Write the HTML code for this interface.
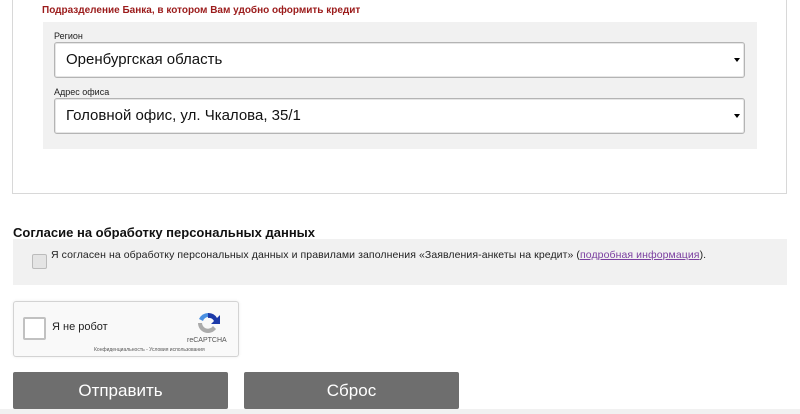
<!DOCTYPE html>
<html><head><meta charset="utf-8"><style>
body{margin:0;width:800px;height:414px;background:#fff;position:relative;overflow:hidden;font-family:"Liberation Sans",Arial,sans-serif;}
.a{position:absolute}
.sel{position:absolute;left:54px;width:689px;height:34px;background:#fff;border:1px solid #b4b4b4;border-radius:3px;box-shadow:inset 0 0 0 1px #e6e6e6;font-size:15px;color:#111;line-height:34px;text-indent:11px}
.sel:after{content:"";position:absolute;right:4px;top:15px;border-left:3px solid transparent;border-right:3px solid transparent;border-top:4px solid #000}
.lbl{position:absolute;left:54px;font-size:9px;color:#222}
.btn{position:absolute;top:372px;height:37px;width:215px;background:#6e6e6e;border-radius:2px;color:#fff;font-size:17px;text-align:center;line-height:37px}
</style></head><body>
<div class="a" style="left:12px;top:-2px;width:773px;height:195px;border:1px solid #d8d8d8;border-top:none"></div>
<div class="a" style="left:42px;top:5px;font-size:10px;font-weight:bold;color:#9b1b1b">Подразделение Банка, в котором Вам удобно оформить кредит</div>
<div class="a" style="left:43px;top:22px;width:714px;height:127px;background:#f1f1f1"></div>
<div class="lbl" style="top:31px">Регион</div>
<div class="sel" style="top:42px">Оренбургская область</div>
<div class="lbl" style="top:87px">Адрес офиса</div>
<div class="sel" style="top:98px">Головной офис, ул. Чкалова, 35/1</div>
<div class="a" style="left:13px;top:225px;font-size:13px;font-weight:bold;color:#111">Согласие на обработку персональных данных</div>
<div class="a" style="left:13px;top:239px;width:774px;height:46px;background:#f1f1f1"></div>
<div class="a" style="left:32px;top:254px;width:13px;height:13px;border:1px solid #bbb;border-radius:2px;background:#e4e4e4"></div>
<div class="a" style="left:51px;top:249px;font-size:10.5px;color:#222;letter-spacing:0.08px">Я согласен на обработку персональных данных и правилами заполнения «Заявления-анкеты на кредит» (<span style="color:#7b3fa0;text-decoration:underline">подробная информация</span>).</div>
<div class="a" style="left:13px;top:301px;width:224px;height:54px;border:1px solid #d3d3d3;border-radius:3px;background:#f9f9f9;box-shadow:0 0 3px rgba(0,0,0,.08)"></div>
<div class="a" style="left:23px;top:317px;width:19px;height:19px;border:2px solid #c1c1c1;border-radius:2px;background:#fff"></div>
<div class="a" style="left:52px;top:321px;font-size:11px;color:#222">Я не робот</div>
<svg class="a" style="left:195px;top:310px" width="26" height="26" viewBox="0 0 26 26"><path d="M13 3a10 10 0 0 1 9 5l3-3v9h-9l3-3a6 6 0 0 0-6-3z" fill="#1c3aa9"/><path d="M13 3a10 10 0 0 0-9 6l4 2a6 6 0 0 1 5-4z" fill="#4a90e2"/><path d="M3 13a10 10 0 0 0 18 6l-3-3a6 6 0 0 1-11-3z" fill="#ababab"/></svg>
<div class="a" style="left:187px;top:337px;font-size:7px;color:#555">reCAPTCHA</div>
<div class="a" style="left:94px;top:347px;font-size:5px;color:#555">Конфиденциальность - Условия использования</div>
<div class="btn" style="left:13px">Отправить</div>
<div class="btn" style="left:244px">Сброс</div>
<div class="a" style="left:0;top:409px;width:800px;height:5px;background:#f1f1f1"></div>
</body></html>
